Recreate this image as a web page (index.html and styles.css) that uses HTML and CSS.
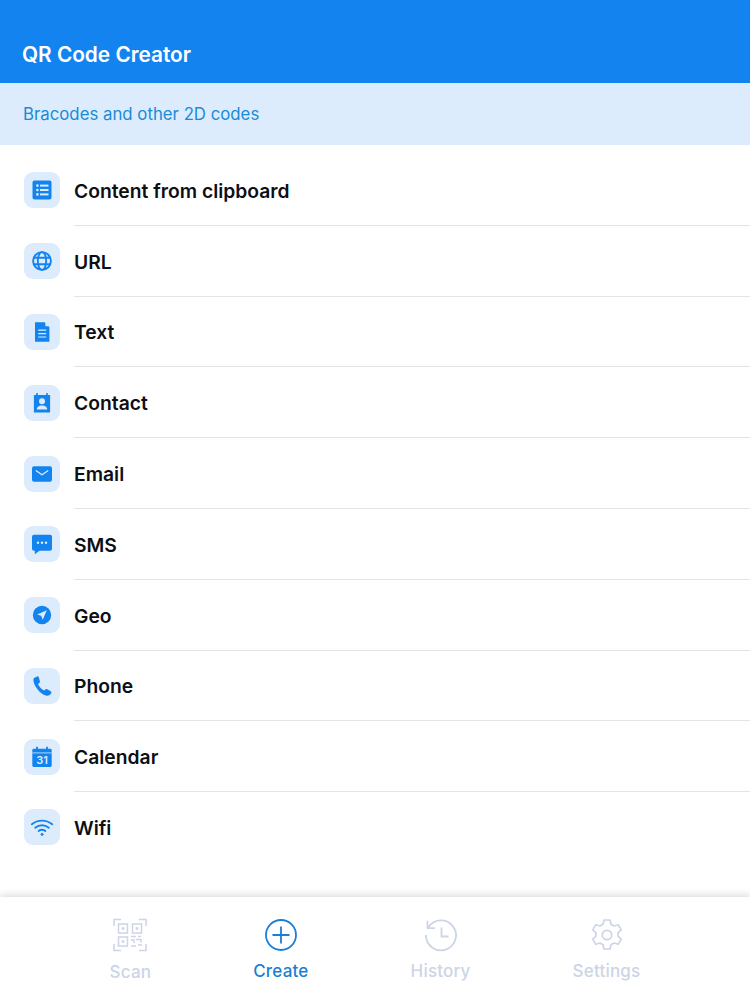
FILE: index.html
```html
<!DOCTYPE html>
<html lang="en">
<head>
<meta charset="utf-8">
<title>QR Code Creator</title>
<link rel="stylesheet" href="styles.css">
</head>
<body>
<div class="app">
  <header class="header"><h1 class="title">QR Code Creator</h1></header>
  <div class="subheader">Bracodes and other 2D codes</div>
  <ul class="list">
    <li class="row">
      <span class="tile"><svg class="icon" viewBox="0 0 24 24"><rect x="2.500" y="2.500" width="19" height="19" rx="2" fill="#1384ef"/><g fill="#dcecfd"><circle cx="7.400" cy="7.600" r="1.300"/><circle cx="7.400" cy="12" r="1.300"/><circle cx="7.400" cy="16.400" r="1.300"/><rect x="10" y="6.600" width="8.500" height="2"/><rect x="10" y="11" width="8.500" height="2"/><rect x="10" y="15.400" width="8.500" height="2"/></g></svg></span>
      <span class="label">Content from clipboard</span>
    </li>
    <li class="row">
      <span class="tile"><svg class="icon" viewBox="0 0 24 24" fill="none" stroke="#1384ef" stroke-width="1.900"><circle cx="12" cy="12" r="8.900"/><ellipse cx="12" cy="12" rx="4.200" ry="8.900"/><path d="M3.800 8.800h16.400M3.800 15.200h16.400"/></svg></span>
      <span class="label">URL</span>
    </li>
    <li class="row">
      <span class="tile"><svg class="icon" viewBox="0 0 24 24"><path d="M5 2.200h9.600L19.400 7v14.800H5z" fill="#1384ef"/><path d="M15.400 2.200 19.400 6.200h-4z" fill="#dcecfd"/><path d="M8.200 10.200h8M8.200 13.600h8M8.200 17h8" stroke="#dcecfd" stroke-width="1.200"/></svg></span>
      <span class="label">Text</span>
    </li>
    <li class="row">
      <span class="tile"><svg class="icon" viewBox="0 0 24 24"><path d="M4.500 4h15a.6.6 0 0 1 .6.6V21a.6.6 0 0 1-.6.6h-15a.6.6 0 0 1-.6-.6V4.600a.6.6 0 0 1 .6-.6z" fill="#1384ef"/><path d="M7 2v3M17 2v3" stroke="#1384ef" stroke-width="1.600"/><circle cx="12" cy="10.200" r="3" fill="#dcecfd"/><path d="M6.800 18.400c0-2.700 2.500-4 5.200-4s5.200 1.300 5.200 4z" fill="#dcecfd"/></svg></span>
      <span class="label">Contact</span>
    </li>
    <li class="row">
      <span class="tile"><svg class="icon" viewBox="0 0 24 24"><rect x="2" y="4.200" width="20" height="15.600" rx="2" fill="#1384ef"/><path d="M5.800 8.500 12 12.800l6.200-4.300" fill="none" stroke="#dcecfd" stroke-width="1.300"/></svg></span>
      <span class="label">Email</span>
    </li>
    <li class="row">
      <span class="tile"><svg class="icon" viewBox="0 0 24 24"><path d="M4 2.800h16a2 2 0 0 1 2 2v12a2 2 0 0 1-2 2H9.500L4.800 22.300v-3.500H4a2 2 0 0 1-2-2v-12a2 2 0 0 1 2-2z" fill="#1384ef"/><g fill="#dcecfd"><circle cx="8" cy="10.800" r="1.200"/><circle cx="12" cy="10.800" r="1.200"/><circle cx="16" cy="10.800" r="1.200"/></g></svg></span>
      <span class="label">SMS</span>
    </li>
    <li class="row">
      <span class="tile"><svg class="icon" viewBox="0 0 24 24"><circle cx="12" cy="12" r="9.200" fill="#1384ef"/><path d="M16.800 7.200 7.200 11.400l4 1.400 1.500 4z" fill="#dcecfd"/></svg></span>
      <span class="label">Geo</span>
    </li>
    <li class="row">
      <span class="tile"><svg class="icon" viewBox="0 0 24 24"><path d="M7.300 2.400 4.300 3.800C2.800 5 3.300 8.500 5.600 12.500c3 5 7.200 8.600 11 9.200 1.600.2 3.300-.6 4.500-2.200.6-.9.300-1.700-.4-2.200l-3.400-2.100c-.8-.5-1.500-.3-2.100.3l-1 1.100c-2.400-1.200-5-4.100-6.200-6.700l1.300-1c.7-.6.800-1.300.5-2.100L8.700 3c-.3-.7-.9-.9-1.400-.6z" fill="#1384ef"/></svg></span>
      <span class="label">Phone</span>
    </li>
    <li class="row">
      <span class="tile"><svg class="icon" viewBox="0 0 24 24"><path d="M3.700 3.800h16.600a1.400 1.400 0 0 1 1.400 1.400v15.400a1.400 1.400 0 0 1-1.400 1.400H3.700a1.400 1.400 0 0 1-1.400-1.400V5.200a1.400 1.400 0 0 1 1.400-1.400z" fill="#1384ef"/><path d="M7 1.800v3.500M17 1.800v3.500" stroke="#1384ef" stroke-width="1.800"/><path d="M2.300 7.900h19.400" stroke="#dcecfd" stroke-width=".8"/><text class="cal-num" x="12" y="19.300" text-anchor="middle">31</text></svg></span>
      <span class="label">Calendar</span>
    </li>
    <li class="row">
      <span class="tile"><svg class="icon" viewBox="0 0 24 24" fill="none" stroke="#1384ef" stroke-width="1.900" stroke-linecap="round"><path d="M1.800 9.200c6-4.800 14.400-4.800 20.400 0"/><path d="M5.200 12.700c4-3.200 9.600-3.200 13.600 0"/><path d="M8.600 16c2-1.500 4.800-1.500 6.800 0"/><circle cx="12" cy="19.400" r="1" fill="#1384ef" stroke-width="1"/></svg></span>
      <span class="label">Wifi</span>
    </li>
  </ul>
  <nav class="tabbar">
    <div class="tab tab-scan">
      <svg class="tab-icon" viewBox="0 0 34 34" fill="none" stroke="currentColor" stroke-width="1.500"><path d="M1 8V1.500h7M26 1.500h7V8M1 26v6.500h7M33 26v6.500h-7"/><rect x="5.500" y="6" width="9" height="9"/><rect x="8.700" y="9.200" width="2.600" height="2.600" fill="currentColor" stroke="none"/><rect x="19.500" y="6" width="9" height="9"/><rect x="22.700" y="9.200" width="2.600" height="2.600" fill="currentColor" stroke="none"/><rect x="5.500" y="19" width="9" height="9"/><rect x="8.700" y="22.200" width="2.600" height="2.600" fill="currentColor" stroke="none"/><path d="M18 18.500h5M25 18.500h3M18 22h3v3M23 21.500h5v3M18 28h5M25 27h4"/></svg>
      <span class="tab-label">Scan</span>
    </div>
    <div class="tab tab-active">
      <svg class="tab-icon" viewBox="0 0 34 34" fill="none" stroke="currentColor" stroke-width="1.800"><circle cx="17" cy="17" r="15"/><path d="M17 8.500v17M8.500 17h17"/></svg>
      <span class="tab-label">Create</span>
    </div>
    <div class="tab">
      <svg class="tab-icon" viewBox="0 0 34 34" fill="none" stroke="currentColor" stroke-width="1.800"><path d="M4.200 9.500A15 15 0 1 1 2 17"/><path d="M3.500 2.800v7.400h7.400"/><path d="M17.500 9.500v9h7"/></svg>
      <span class="tab-label">History</span>
    </div>
    <div class="tab">
      <svg class="tab-icon" viewBox="0 0 34 34" fill="none" stroke="currentColor" stroke-width="1.700"><path d="M14 2h6l1 4.300 3 1.700 4.200-1.300 3 5.200-3.200 3v3.200l3.200 3-3 5.200-4.200-1.300-3 1.700-1 4.300h-6l-1-4.300-3-1.700-4.200 1.300-3-5.200 3.200-3v-3.200l-3.200-3 3-5.200L10 8l3-1.700z" stroke-linejoin="round"/><circle cx="17" cy="17" r="4.700"/></svg>
      <span class="tab-label">Settings</span>
    </div>
  </nav>
</div>
</body>
</html>
```
FILE: styles.css
```css
* { box-sizing: border-box; }
html, body { margin: 0; padding: 0; }
body {
  font-family: Inter, "Liberation Sans", sans-serif;
  background: #fff;
  color: #0d0f14;
}
.app {
  width: 750px;
  height: 1000px;
  display: flex;
  flex-direction: column;
  overflow: hidden;
}
.header {
  height: 83px;
  background: #1384ef;
  padding: 0 22px 15px;
  display: flex;
  align-items: flex-end;
}
.title {
  margin: 0;
  font-size: 20.8px;
  line-height: 26px;
  font-weight: 600;
  color: #fff;
}
.subheader {
  height: 62px;
  background: #dcecfd;
  padding: 0 23px 1px;
  display: flex;
  align-items: center;
  font-size: 16.8px;
  color: #1a8bd8;
}
.list {
  list-style: none;
  margin: 0;
  padding: 10px 0 0;
  flex: 1;
}
.row {
  height: 70.8px;
  display: flex;
  align-items: center;
  gap: 14px;
  padding-left: 24px;
}
.row:last-child { height: 69px; }
.row:last-child .label { border-bottom: 0; }
.tile {
  width: 36px;
  height: 36px;
  flex: none;
  background: #dcecfd;
  border-radius: 9px;
  display: flex;
  align-items: center;
  justify-content: center;
}
.icon { width: 24px; height: 24px; display: block; }
.cal-num { font-family: Inter, sans-serif; font-size: 11px; font-weight: 600; fill: #dcecfd; }
.label {
  flex: 1;
  align-self: stretch;
  display: flex;
  align-items: center;
  padding-top: 2px;
  border-bottom: 1px solid #e4e4e7;
  font-size: 19.3px;
  font-weight: 600;
}
.tabbar {
  height: 103px;
  flex: none;
  background: #fff;
  box-shadow: 0 -2px 7px rgba(150, 130, 150, 0.3);
  display: flex;
  justify-content: center;
  gap: 102px;
  padding-top: 21px;
  color: #cdd4e6;
}
.tab {
  display: flex;
  flex-direction: column;
  align-items: center;
  gap: 9px;
}
.tab-scan .tab-label { margin-top: 1px; }
.tab-active { color: #1a7fd6; }
.tab-icon { width: 34px; height: 34px; display: block; }
.tab-label { font-size: 17px; line-height: 20px; font-weight: 500; letter-spacing: .2px; }
```
